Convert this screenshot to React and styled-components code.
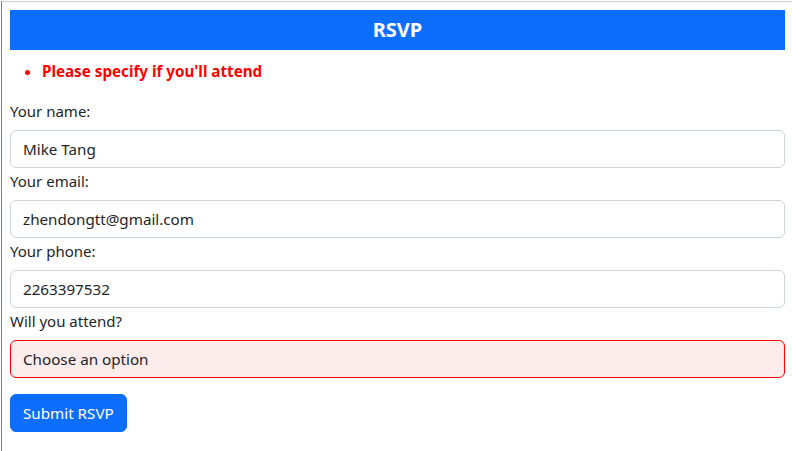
import React from "react";
import styled, { createGlobalStyle } from "styled-components";

const Global = createGlobalStyle`
  html, body { margin: 0; padding: 0; background: #fff; }
  body { font-family: "Noto Sans", "Open Sans", sans-serif; color: #212529; font-size: 16px; line-height: 1.5; }
  * { box-sizing: border-box; }
`;

const Frame = styled.div`
  margin: 1px 0 0 1px;
  border-top: 1px solid #cdcdcd;
  border-left: 1px solid #7f7f7f;
  padding: 8px 7px 19px 8px;
  min-height: 450px;
`;

const Header = styled.h3`
  margin: 0 0 8px;
  height: 40px;
  background: #0d6efd;
  color: #fff;
  font-size: 20px;
  font-weight: 700;
  line-height: 40px;
  text-align: center;
`;

const Errors = styled.ul`
  margin: 0 0 16px;
  padding: 1px 0 0 32px;
  height: 24px;
  color: #ff0000;
  font-weight: 700;
  font-size: 15.2px;
  line-height: 24px;
`;

const Label = styled.label`
  display: block;
  margin-bottom: 8px;
  padding-top: 1px;
  height: 24px;
  line-height: 24px;
  font-size: 15px;
`;

const Field = styled.div`
  display: block;
`;

const Input = styled.input`
  display: block;
  width: 100%;
  height: 38px;
  padding: 6px 12px;
  font: inherit;
  font-size: 15.2px;
  color: #212529;
  background: ${(p) => (p.$invalid ? "#fdecec" : "#fff")};
  border: 1px solid ${(p) => (p.$invalid ? "#ff0000" : "#ced4da")};
  border-radius: 6px;
  outline: none;
`;

const Select = styled.select`
  display: block;
  width: 100%;
  height: 38px;
  padding: 6px 12px;
  font: inherit;
  font-size: 15.2px;
  color: #212529;
  background: ${(p) => (p.$invalid ? "#fdecec" : "#fff")};
  border: 1px solid ${(p) => (p.$invalid ? "#ff0000" : "#ced4da")};
  border-radius: 6px;
  appearance: none;
  -webkit-appearance: none;
  outline: none;
`;

const Button = styled.button`
  margin-top: 16px;
  height: 38px;
  padding: 6px 12px;
  font: inherit;
  font-size: 15.2px;
  color: #fff;
  background: #0d6efd;
  border: 1px solid #0d6efd;
  border-radius: 6px;
`;

export default function App() {
  return (
    <>
      <Global />
      <Frame>
        <Header>RSVP</Header>
        <Errors>
          <li>Please specify if you'll attend</li>
        </Errors>
        <Field>
          <Label>Your name:</Label>
          <Input defaultValue="Mike Tang" />
        </Field>
        <Field>
          <Label>Your email:</Label>
          <Input defaultValue="zhendongtt@gmail.com" />
        </Field>
        <Field>
          <Label>Your phone:</Label>
          <Input defaultValue="2263397532" />
        </Field>
        <Field>
          <Label>Will you attend?</Label>
          <Select $invalid defaultValue="">
            <option value="">Choose an option</option>
            <option value="yes">Yes</option>
            <option value="no">No</option>
          </Select>
        </Field>
        <Button>Submit RSVP</Button>
      </Frame>
    </>
  );
}
